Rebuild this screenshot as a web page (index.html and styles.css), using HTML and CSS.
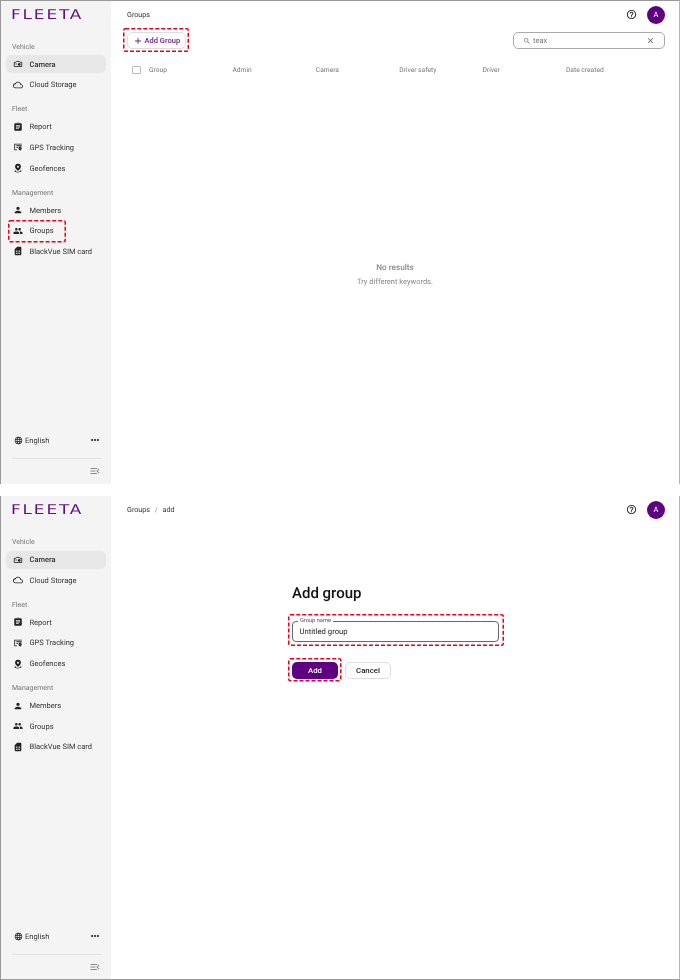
FILE: index.html
```html
<!DOCTYPE html>
<html lang="en">
<head>
  <meta charset="UTF-8">
  <meta name="viewport" content="width=device-width, initial-scale=1.0">
  <title>FLEETA - Groups</title>
  <link rel="stylesheet" href="styles.css">
</head>
<body>
  <!-- icon sprite -->
  <svg class="sprite" xmlns="http://www.w3.org/2000/svg">
    <symbol id="i-camera" viewBox="0 0 24 24"><path d="M3 8h4l1.500-2h7L17 8h4v10H3z" fill="none" stroke="currentColor" stroke-width="2"/><circle cx="15" cy="13" r="3.200"/><path d="M6 11h3v2H6z"/></symbol>
    <symbol id="i-cloud" viewBox="0 0 24 24"><path d="M19.350 10.040C18.670 6.590 15.640 4 12 4 9.110 4 6.600 5.640 5.350 8.040 2.340 8.360 0 10.910 0 14c0 3.310 2.690 6 6 6h13c2.760 0 5-2.240 5-5 0-2.640-2.050-4.780-4.650-4.960zM19 18H6c-2.210 0-4-1.790-4-4s1.790-4 4-4h.71C7.370 7.690 9.480 6 12 6c3.040 0 5.500 2.460 5.500 5.500v.5H19c1.660 0 3 1.340 3 3s-1.340 3-3 3z"/></symbol>
    <symbol id="i-report" viewBox="0 0 24 24"><path d="M19 3h-4.180C14.400 1.840 13.300 1 12 1c-1.300 0-2.400.84-2.820 2H5c-1.100 0-2 .9-2 2v14c0 1.100.9 2 2 2h14c1.100 0 2-.9 2-2V5c0-1.100-.9-2-2-2zm-7 0c.55 0 1 .45 1 1s-.45 1-1 1-1-.45-1-1 .45-1 1-1zm2 14H7v-2h7v2zm3-4H7v-2h10v2zm0-4H7V7h10v2z"/></symbol>
    <symbol id="i-gps" viewBox="0 0 24 24"><path d="M3 4h18v2H5v12h5v2H3z"/><path d="M8 8h13v2H8zM8 12h4v2H8zM17 11a4 4 0 0 1 4 4c0 3-4 6-4 6s-4-3-4-6a4 4 0 0 1 4-4zm0 3a1 1 0 1 0 0 2 1 1 0 0 0 0-2z"/></symbol>
    <symbol id="i-geofence" viewBox="0 0 24 24"><path d="M12 2a7 7 0 0 1 7 7c0 3.500-3 6.500-5.500 8.500L12 19l-1.500-1.500C8 15.500 5 12.500 5 9a7 7 0 0 1 7-7zm0 4.500a2.500 2.500 0 1 0 0 5 2.500 2.500 0 0 0 0-5z"/><path d="M7 17.500c-2 .5-3.500 1.300-3.500 2.300C3.500 21.300 7.300 22.500 12 22.500s8.500-1.200 8.500-2.700c0-1-1.500-1.800-3.500-2.300l-.7 1.400c1.200.3 2 .6 2.200.9-.6.600-3.300 1.200-6.500 1.200s-5.900-.6-6.500-1.200c.2-.3 1-.6 2.200-.9z"/></symbol>
    <symbol id="i-person" viewBox="0 0 24 24"><path d="M12 12c2.210 0 4-1.790 4-4s-1.790-4-4-4-4 1.790-4 4 1.790 4 4 4zm0 2c-2.670 0-8 1.340-8 4v2h16v-2c0-2.660-5.330-4-8-4z"/></symbol>
    <symbol id="i-group" viewBox="0 0 24 24"><path d="M16 11c1.660 0 2.990-1.340 2.990-3S17.660 5 16 5c-1.660 0-3 1.340-3 3s1.340 3 3 3zm-8 0c1.660 0 2.990-1.340 2.990-3S9.660 5 8 5C6.340 5 5 6.340 5 8s1.340 3 3 3zm0 2c-2.330 0-7 1.170-7 3.500V19h14v-2.500c0-2.330-4.670-3.500-7-3.500zm8 0c-.29 0-.62.02-.97.05 1.160.84 1.970 1.970 1.970 3.450V19h6v-2.500c0-2.330-4.670-3.500-7-3.500z"/></symbol>
    <symbol id="i-sim" viewBox="0 0 24 24"><path d="M19.990 4c0-1.100-.89-2-1.990-2h-8L4 8v12c0 1.100.9 2 2 2h12c1.100 0 2-.9 2-2l-.01-16zM9 19H7v-2h2v2zm8 0h-2v-2h2v2zm-8-4H7v-4h2v4zm4 4h-2v-4h2v4zm0-6h-2v-2h2v2zm4 2h-2v-4h2v4z"/></symbol>
    <symbol id="i-globe" viewBox="0 0 24 24"><path d="M11.990 2C6.470 2 2 6.480 2 12s4.470 10 9.990 10C17.520 22 22 17.520 22 12S17.520 2 11.990 2zm6.930 6h-2.950c-.32-1.250-.78-2.450-1.380-3.560 1.840.63 3.370 1.910 4.330 3.560zM12 4.040c.83 1.200 1.480 2.530 1.910 3.960h-3.820c.43-1.430 1.080-2.760 1.910-3.960zM4.260 14C4.100 13.360 4 12.690 4 12s.1-1.360.26-2h3.380c-.08.66-.14 1.320-.14 2 0 .68.06 1.340.14 2H4.260zm.82 2h2.950c.32 1.250.78 2.450 1.380 3.560-1.840-.63-3.370-1.900-4.330-3.560zm2.950-8H5.080c.96-1.660 2.490-2.930 4.330-3.560C8.810 5.550 8.350 6.750 8.030 8zM12 19.960c-.83-1.200-1.480-2.530-1.910-3.960h3.820c-.43 1.430-1.080 2.760-1.910 3.960zM14.340 14H9.660c-.09-.66-.16-1.320-.16-2 0-.68.07-1.350.16-2h4.680c.09.65.16 1.320.16 2 0 .68-.07 1.340-.16 2zm.25 5.560c.6-1.110 1.060-2.310 1.380-3.560h2.950c-.96 1.650-2.490 2.930-4.330 3.560zM16.360 14c.08-.66.14-1.320.14-2 0-.68-.06-1.340-.14-2h3.380c.16.64.26 1.310.26 2s-.1 1.360-.26 2h-3.380z"/></symbol>
    <symbol id="i-more" viewBox="0 0 24 24"><circle cx="5" cy="12" r="2.600"/><circle cx="12" cy="12" r="2.600"/><circle cx="19" cy="12" r="2.600"/></symbol>
    <symbol id="i-collapse" viewBox="0 0 24 24"><path d="M3 18h13v-2H3v2zm0-5h10v-2H3v2zm0-7v2h13V6H3zm18 9.590L17.420 12 21 8.410 19.590 7l-5 5 5 5L21 15.590z"/></symbol>
    <symbol id="i-help" viewBox="0 0 24 24"><path d="M11 18h2v-2h-2v2zm1-16C6.480 2 2 6.480 2 12s4.480 10 10 10 10-4.480 10-10S17.520 2 12 2zm0 18c-4.410 0-8-3.590-8-8s3.590-8 8-8 8 3.590 8 8-3.590 8-8 8zm0-14c-2.210 0-4 1.790-4 4h2c0-1.100.9-2 2-2s2 .9 2 2c0 2-3 1.750-3 5h2c0-2.250 3-2.500 3-5 0-2.210-1.790-4-4-4z"/></symbol>
    <symbol id="i-search" viewBox="0 0 24 24"><path d="M15.500 14h-.79l-.28-.27C15.410 12.590 16 11.110 16 9.500 16 5.910 13.090 3 9.500 3S3 5.910 3 9.500 5.910 16 9.500 16c1.610 0 3.090-.59 4.230-1.570l.27.28v.79l5 4.990L20.490 19l-4.990-5zm-6 0C7.010 14 5 11.990 5 9.500S7.010 5 9.500 5 14 7.010 14 9.500 11.990 14 9.500 14z"/></symbol>
    <symbol id="i-close" viewBox="0 0 24 24"><path d="M19 6.410L17.590 5 12 10.590 6.410 5 5 6.410 10.590 12 5 17.590 6.410 19 12 13.410 17.590 19 19 17.590 13.410 12 19 6.410z"/></symbol>
    <symbol id="i-add" viewBox="0 0 24 24"><path d="M19 13h-6v6h-2v-6H5v-2h6V5h2v6h6v2z"/></symbol>
  </svg>

  <!-- Screen 1 : group list, empty search -->
  <section class="screen screen-first">
    <aside class="sidebar">
      <div class="logo"><span>FLEETA</span></div>
      <div class="nav-title">Vehicle</div>
      <a class="nav-item active"><svg class="icon"><use href="#i-camera"/></svg>Camera</a>
      <a class="nav-item"><svg class="icon"><use href="#i-cloud"/></svg>Cloud Storage</a>
      <div class="nav-title">Fleet</div>
      <a class="nav-item"><svg class="icon"><use href="#i-report"/></svg>Report</a>
      <a class="nav-item"><svg class="icon"><use href="#i-gps"/></svg>GPS Tracking</a>
      <a class="nav-item"><svg class="icon"><use href="#i-geofence"/></svg>Geofences</a>
      <div class="nav-title">Management</div>
      <a class="nav-item"><svg class="icon"><use href="#i-person"/></svg>Members</a>
      <a class="nav-item"><svg class="icon"><use href="#i-group"/></svg>Groups<svg class="mark mark-nav"><rect/></svg></a>
      <a class="nav-item"><svg class="icon"><use href="#i-sim"/></svg>BlackVue SIM card</a>
      <div class="sidebar-foot">
        <div class="lang">
          <svg class="icon-sm"><use href="#i-globe"/></svg>
          <span>English</span>
          <svg class="icon-more"><use href="#i-more"/></svg>
        </div>
        <div class="collapse"><svg class="icon-collapse"><use href="#i-collapse"/></svg></div>
      </div>
    </aside>
    <main class="main">
      <header class="topbar">
        <div class="crumbs">Groups</div>
        <svg class="icon-help"><use href="#i-help"/></svg>
        <div class="avatar">A</div>
      </header>
      <div class="toolbar">
        <button class="btn-add"><svg class="icon-add"><use href="#i-add"/></svg>Add Group<svg class="mark mark-add-group"><rect/></svg></button>
        <div class="search">
          <svg class="icon-search"><use href="#i-search"/></svg>
          <span class="search-text">teax</span>
          <svg class="icon-clear"><use href="#i-close"/></svg>
        </div>
      </div>
      <div class="table-head">
        <span class="checkbox"></span>
        <span>Group</span>
        <span>Admin</span>
        <span>Camera</span>
        <span>Driver safety</span>
        <span>Driver</span>
        <span>Date created</span>
      </div>
      <div class="empty">
        <div class="empty-title">No results</div>
        <div class="empty-sub">Try different keywords.</div>
      </div>
    </main>
  </section>

  <!-- Screen 2 : add group form -->
  <section class="screen screen-second">
    <aside class="sidebar">
      <div class="logo"><span>FLEETA</span></div>
      <div class="nav-title">Vehicle</div>
      <a class="nav-item active"><svg class="icon"><use href="#i-camera"/></svg>Camera</a>
      <a class="nav-item"><svg class="icon"><use href="#i-cloud"/></svg>Cloud Storage</a>
      <div class="nav-title">Fleet</div>
      <a class="nav-item"><svg class="icon"><use href="#i-report"/></svg>Report</a>
      <a class="nav-item"><svg class="icon"><use href="#i-gps"/></svg>GPS Tracking</a>
      <a class="nav-item"><svg class="icon"><use href="#i-geofence"/></svg>Geofences</a>
      <div class="nav-title">Management</div>
      <a class="nav-item"><svg class="icon"><use href="#i-person"/></svg>Members</a>
      <a class="nav-item"><svg class="icon"><use href="#i-group"/></svg>Groups</a>
      <a class="nav-item"><svg class="icon"><use href="#i-sim"/></svg>BlackVue SIM card</a>
      <div class="sidebar-foot">
        <div class="lang">
          <svg class="icon-sm"><use href="#i-globe"/></svg>
          <span>English</span>
          <svg class="icon-more"><use href="#i-more"/></svg>
        </div>
        <div class="collapse"><svg class="icon-collapse"><use href="#i-collapse"/></svg></div>
      </div>
    </aside>
    <main class="main">
      <header class="topbar">
        <div class="crumbs">Groups <i>/</i> add</div>
        <svg class="icon-help"><use href="#i-help"/></svg>
        <div class="avatar">A</div>
      </header>
      <div class="form">
        <h1>Add group</h1>
        <div class="field">
          <label>Group name</label>
          <span>Untitled group</span>
          <svg class="mark mark-field"><rect/></svg>
        </div>
        <div class="form-buttons">
          <button class="btn-primary">Add<svg class="mark mark-submit"><rect/></svg></button>
          <button class="btn-cancel">Cancel</button>
        </div>
      </div>
    </main>
  </section>
</body>
</html>
```

FILE: styles.css
```css
* { box-sizing: border-box; }

body {
  margin: 0;
  width: 680px;
  height: 980px;
  font-family: Roboto, "Liberation Sans", sans-serif;
  text-rendering: geometricPrecision;
  color: #222;
  background: white;
  overflow: hidden;
}

.sprite { display: none; }

.screen {
  display: flex;
  height: 484px;
  border-left: 1px solid #9a9a9a;
  border-right: 1px solid #b5b5b5;
  will-change: transform;
}

.screen-first {
  border-top: 1px solid #9a9a9a;
  margin-bottom: 12px;
}

.screen-second { border-bottom: 1px solid #9a9a9a; }

.screen-second .logo { height: 40px; }
.screen-second .collapse { height: 25.5px; }

/* red dashed marks over the highlighted controls */
.mark {
  position: absolute;
  overflow: visible;
  pointer-events: none;
}

.mark rect {
  x: 0.75px;
  y: 0.75px;
  width: calc(100% - 1.5px);
  height: calc(100% - 1.5px);
  rx: 1.5px;
  fill: none;
  stroke: #e8001c;
  stroke-width: 1.5px;
  stroke-dasharray: 4 2;
}

.mark-nav { left: 2px; top: -2px; width: 58px; height: 22.6px; }
.mark-add-group { left: -5px; top: -5px; width: 66px; height: 24px; }
.mark-field { left: -5px; top: -8px; width: 216px; height: 32px; }
.mark-submit { left: -4px; top: -4px; width: 53.5px; height: 23.5px; }

/* sidebar */
.sidebar {
  width: 110px;
  flex: none;
  display: flex;
  flex-direction: column;
  background: #f4f4f4;
  padding: 0 5px;
}

.logo {
  height: 39.5px;
  padding: 6px 0 0 5px;
  font-family: "DejaVu Sans", sans-serif;
  font-size: 13.5px;
  line-height: 16px;
  letter-spacing: 1.5px;
  color: #5e1080;
}

.logo span {
  display: inline-block;
  transform: scaleX(1.25);
  transform-origin: left center;
}

.nav-title {
  height: 12px;
  margin: 7px 0 2.3px;
  padding-left: 6px;
  font-size: 7px;
  line-height: 12px;
  color: #777;
}

.logo + .nav-title { margin: 0 0 2.5px; }

.nav-item {
  position: relative;
  display: flex;
  align-items: center;
  height: 18px;
  margin-bottom: 2.7px;
  font-size: 7.5px;
  color: #333;
  border-radius: 5px;
}

.nav-item.active {
  background: #e7e7e7;
  font-weight: 500;
}

.icon {
  width: 10px;
  height: 10px;
  margin: 0 7px 0 6.5px;
  fill: #222;
  color: #222;
}

.sidebar-foot { margin-top: auto; }

.lang {
  display: flex;
  align-items: center;
  height: 18px;
  padding: 0 6px 0 8px;
  font-size: 7.5px;
  color: #333;
}

.icon-sm {
  width: 9px;
  height: 9px;
  margin-right: 2px;
  fill: #222;
}

.icon-more {
  width: 10px;
  height: 10px;
  margin-left: auto;
  fill: #222;
}

.collapse {
  display: flex;
  justify-content: flex-end;
  align-items: center;
  height: 26.5px;
  margin: 8.5px 5px 0 6px;
  border-top: 1px solid #e0e0e0;
}

.icon-collapse {
  width: 12px;
  height: 12px;
  fill: #8a8a8a;
}

/* main area */
.main {
  flex: 1;
  min-width: 0;
  display: flex;
  flex-direction: column;
  padding: 0 14px 0 16px;
  background: white;
}

.topbar {
  display: flex;
  align-items: center;
  height: 27px;
}

.crumbs {
  font-size: 7.2px;
  color: #333;
  margin-right: auto;
}

.crumbs i {
  font-style: normal;
  color: #888;
  margin: 0 3px;
}

.icon-help {
  width: 11px;
  height: 11px;
  margin-right: 10.5px;
  fill: #222;
}

.avatar {
  width: 18px;
  height: 18px;
  border-radius: 50%;
  background: #5e0080;
  color: white;
  font-size: 7.5px;
  text-align: center;
  line-height: 18px;
}

.toolbar {
  display: flex;
  justify-content: space-between;
  align-items: center;
  margin-top: 4px;
}

.btn-add {
  position: relative;
  display: flex;
  align-items: center;
  height: 17px;
  width: 59px;
  padding: 0 0 0 4.5px;
  background: white;
  border: 1px solid #ddd;
  border-radius: 5px;
  font-family: inherit;
  font-size: 7.5px;
  font-weight: 500;
  color: #6a1b8f;
}

.icon-add {
  width: 10px;
  height: 10px;
  margin-right: 2px;
  fill: #6a1b8f;
}

.search {
  display: flex;
  align-items: center;
  width: 152px;
  height: 17px;
  padding: 0 9px;
  border: 1px solid #aaa;
  border-radius: 5px;
  font-size: 7.5px;
  color: #777;
}

.icon-search {
  width: 8px;
  height: 8px;
  margin-right: 2px;
  fill: #777;
}

.icon-clear {
  width: 9px;
  height: 9px;
  margin-left: auto;
  fill: #666;
}

.table-head {
  display: grid;
  grid-template-columns: 22px repeat(5, 83.4px) 1fr;
  align-items: center;
  height: 14px;
  margin-top: 14px;
  font-size: 6.7px;
  color: #777;
}

.checkbox {
  width: 8.5px;
  height: 8.5px;
  margin-left: 5px;
  border: 1px solid #bbb;
  border-radius: 1px;
}

.empty {
  margin-top: 183.5px;
  margin-right: 2px;
  text-align: center;
}

.empty-title {
  font-size: 8.2px;
  font-weight: 500;
  color: #888;
  line-height: 14px;
}

.empty-sub {
  font-size: 7.5px;
  color: #888;
  line-height: 14px;
}

/* add group form */
.form {
  width: 207px;
  margin: 60px 0 0 165px;
}

.form h1 {
  margin: 0;
  font-size: 15px;
  font-weight: 500;
  line-height: 20px;
  color: #111;
}

.field {
  position: relative;
  height: 21px;
  margin-top: 18px;
  padding-left: 6.5px;
  border: 1px solid #666;
  border-radius: 4px;
  font-size: 7.7px;
  line-height: 19px;
}

.field label {
  position: absolute;
  left: 5px;
  top: -4px;
  padding: 0 2px;
  background: white;
  font-size: 5.7px;
  line-height: 7px;
  color: #555;
}

.form-buttons {
  display: flex;
  gap: 7px;
  margin-top: 20px;
}

.form-buttons button {
  width: 46px;
  height: 17px;
  padding: 0;
  border-radius: 5px;
  font-family: inherit;
  font-size: 7.8px;
  font-weight: 500;
}

.btn-primary {
  position: relative;
  background: #5e0080;
  border: none;
  color: white;
}

.btn-cancel {
  background: white;
  border: 1px solid #ddd;
  color: #222;
}
```
